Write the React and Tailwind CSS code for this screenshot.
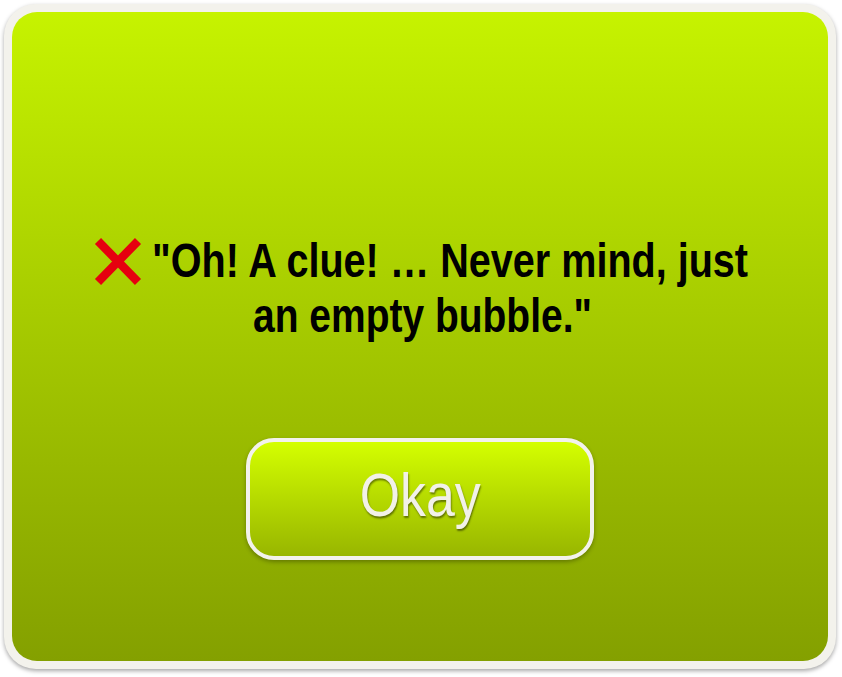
export default function App() {
  const bold = { fontFamily: '"Liberation Sans", Arial, sans-serif' };
  return (
    <div className="w-[842px] h-[677px] bg-white flex items-start justify-start">
      <div className="mt-[4px] ml-[4px] w-[832px] h-[665px] rounded-[32px] bg-[#f3f2ec] p-[8px] shadow-[0_2px_4px_rgba(0,0,0,0.35)]">
        <div className="w-full h-full rounded-[25px] bg-gradient-to-b from-[#c6f300] to-[#84a000] flex flex-col items-center">
          <div className="mt-[221px] flex flex-col items-center text-black font-bold text-[48px] leading-[55px]" style={bold}>
            <div className="flex items-center">
              <svg width="48" height="49" viewBox="0 0 48 49" className="mr-[10px] mt-[2px] shrink-0">
                <path d="M4 4 L44 45 M44 4 L4 45" stroke="#e6000f" strokeWidth="8.5" strokeLinecap="butt" />
              </svg>
              <div className="w-[595px] h-[55px]">
                <span className="inline-block whitespace-nowrap origin-left scale-x-[0.824]">"Oh! A clue! … Never mind, just</span>
              </div>
            </div>
            <div className="w-[338px] h-[55px] ml-[4px]">
              <span className="inline-block whitespace-nowrap origin-left scale-x-[0.812]">an empty bubble."</span>
            </div>
          </div>
          <div className="mt-[95px] w-[348px] h-[122px] rounded-[28px] border-[4px] border-[#f3f2ec] bg-gradient-to-b from-[#d4ff00] to-[#98b600] shadow-[0_2px_4px_rgba(0,0,0,0.3)] flex items-center justify-center pb-[8px]">
            <span className="inline-block scale-x-[0.85] text-[61px] leading-[70px] text-[#f2f1e8] [text-shadow:1px_2px_2px_rgba(0,0,0,0.45)]" style={bold}>
              <span className="font-normal">Okay</span>
            </span>
          </div>
        </div>
      </div>
    </div>
  );
}
